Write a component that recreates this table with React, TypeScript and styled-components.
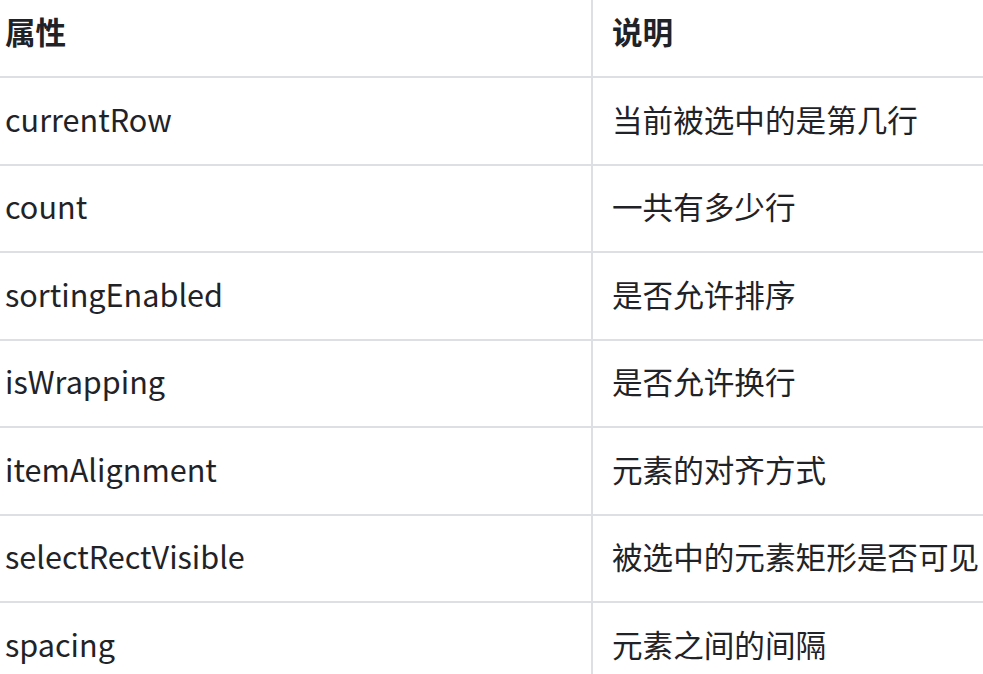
import styled, { createGlobalStyle } from "styled-components";

const rows = [
    { name: "currentRow", desc: "当前被选中的是第几行" },
    { name: "count", desc: "一共有多少行" },
    { name: "sortingEnabled", desc: "是否允许排序" },
    { name: "isWrapping", desc: "是否允许换行" },
    { name: "itemAlignment", desc: "元素的对齐方式" },
    { name: "selectRectVisible", desc: "被选中的元素矩形是否可见" },
    { name: "spacing", desc: "元素之间的间隔" },
]

export default function App() {
    return (
        <>
            <GlobalStyle />
            <Frame>
                <Table>
                    <thead>
                        <tr>
                            <HeadCell $first>属性</HeadCell>
                            <HeadCell>说明</HeadCell>
                        </tr>
                    </thead>
                    <tbody>
                        {rows.map(row => (
                            <Row key={row.name}>
                                <Cell $first>{row.name}</Cell>
                                <Cell>{row.desc}</Cell>
                            </Row>
                        ))}
                    </tbody>
                </Table>
            </Frame>
        </>
    )
}

const GlobalStyle = createGlobalStyle`
html, body {
    margin: 0;
    padding: 0;
    background: #ffffff;
    overflow: hidden;
}
body {
    font-family: "Noto Sans CJK SC", "Noto Sans", sans-serif;
    color: #1f2328;
}
`

const Frame = styled.div`
width: 983px;
height: 674px;
overflow: hidden;
`

const Table = styled.table`
border-collapse: collapse;
table-layout: fixed;
width: 1100px;
font-size: 30.6px;
line-height: 1;
`

const HeadCell = styled.th<{ $first?: boolean }>`
width: ${props => props.$first ? "592px" : "auto"};
height: 77px;
box-sizing: border-box;
padding: 0 0 13px ${props => props.$first ? "5px" : "19px"};
text-align: left;
vertical-align: middle;
font-weight: 700;
border-left: ${props => props.$first ? "none" : "2px solid #dcdfe3"};
border-bottom: 2px solid #dcdfe3;
`

const Row = styled.tr`
height: 87.5px;
`

const Cell = styled.td<{ $first?: boolean }>`
box-sizing: border-box;
padding: 0 0 3px ${props => props.$first ? "5px" : "19px"};
vertical-align: middle;
white-space: nowrap;
border-left: ${props => props.$first ? "none" : "2px solid #dcdfe3"};
border-bottom: 2px solid #dcdfe3;
`
